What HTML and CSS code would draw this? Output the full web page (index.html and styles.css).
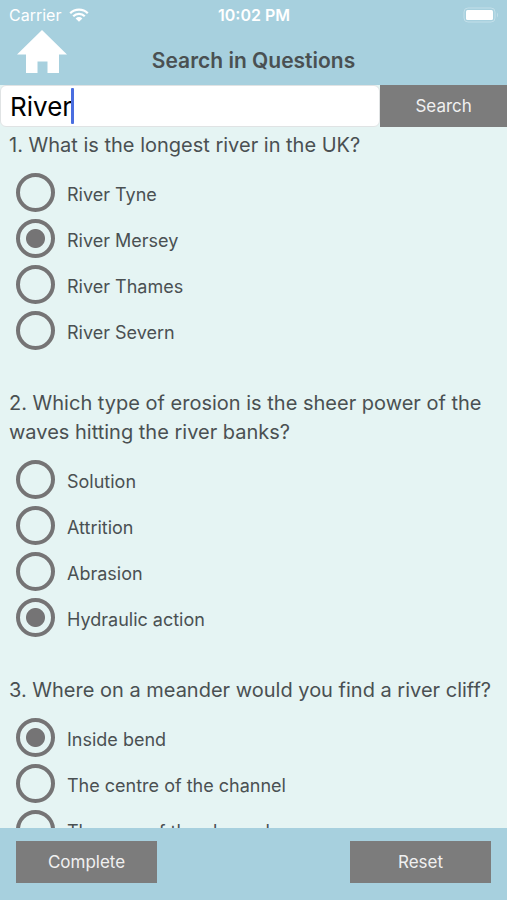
FILE: index.html
```html
<!DOCTYPE html>
<html lang="en">
<head>
<meta charset="utf-8">
<meta name="viewport" content="width=device-width, initial-scale=1">
<title>Search in Questions</title>
<link rel="stylesheet" href="styles.css">
</head>
<body>
<div class="app">
  <header class="header">
    <div class="status">
      <div class="carrier">
        <span>Carrier</span>
        <svg class="wifi" viewBox="0 0 20 14" aria-hidden="true">
          <path d="M1.2 5.2a12.6 12.6 0 0 1 17.6 0M4.2 8.2a8.3 8.3 0 0 1 11.6 0" fill="none" stroke="#fff" stroke-width="2.3"/>
          <path d="M10 13.7 6.6 10.4a4.9 4.9 0 0 1 6.8 0z" fill="#fff"/>
        </svg>
      </div>
      <time class="clock">10:02 PM</time>
      <svg class="battery" viewBox="0 0 36 16" aria-hidden="true">
        <rect x="1" y="1" width="31" height="14" rx="4" fill="none" stroke="#c2dfe9" stroke-width="1"/>
        <rect x="3" y="3" width="27" height="10" rx="1.500" fill="#fff"/>
        <path d="M34 5.5q2 2.5 0 5z" fill="#c2dfe9"/>
      </svg>
    </div>
    <div class="titlebar">
      <a class="home" href="#" aria-label="Home">
        <svg viewBox="0 0 50 44" aria-hidden="true"><path d="M25 0 50 24.500H42V43H30.500V31.500H20.500V43H9V24.500H0z" fill="#fff"/></svg>
      </a>
      <h1 class="title">Search in Questions</h1>
    </div>
  </header>
  <form class="search">
    <div class="field">
      <input class="query" type="text" value="River" aria-label="Search questions">
      <span class="caret"></span>
    </div>
    <button class="button search-button" type="button">Search</button>
  </form>
  <main class="questions">
    <fieldset class="question">
      <legend class="prompt">1. What is the longest river in the UK?</legend>
      <label class="option"><input type="radio" name="q1">River Tyne</label>
      <label class="option"><input type="radio" name="q1" checked>River Mersey</label>
      <label class="option"><input type="radio" name="q1">River Thames</label>
      <label class="option"><input type="radio" name="q1">River Severn</label>
    </fieldset>
    <fieldset class="question">
      <legend class="prompt">2. Which type of erosion is the sheer power of the waves hitting the river banks?</legend>
      <label class="option"><input type="radio" name="q2">Solution</label>
      <label class="option"><input type="radio" name="q2">Attrition</label>
      <label class="option"><input type="radio" name="q2">Abrasion</label>
      <label class="option"><input type="radio" name="q2" checked>Hydraulic action</label>
    </fieldset>
    <fieldset class="question">
      <legend class="prompt">3. Where on a meander would you find a river cliff?</legend>
      <label class="option"><input type="radio" name="q3" checked>Inside bend</label>
      <label class="option"><input type="radio" name="q3">The centre of the channel</label>
      <label class="option"><input type="radio" name="q3">The near of the channel</label>
    </fieldset>
  </main>
  <footer class="actions">
    <button class="button action" type="button">Complete</button>
    <button class="button action" type="button">Reset</button>
  </footer>
</div>
</body>
</html>
```
FILE: styles.css
```css
* {
  box-sizing: border-box;
}

body {
  margin: 0;
  font-family: Inter, Roboto, sans-serif;
  color: #4a5052;
}

.app {
  display: flex;
  flex-direction: column;
  height: 100vh;
  background: #e5f4f3;
}

.header {
  background: #a7d0de;
}

.status {
  display: grid;
  grid-template-columns: 1fr auto 1fr;
  align-items: center;
  height: 30px;
  padding: 0 8px 0 9px;
  font-size: 16px;
  color: #fff;
}

.carrier {
  display: flex;
  align-items: center;
  gap: 8px;
}

.wifi {
  width: 20px;
  height: 14px;
}

.clock {
  font-weight: 600;
}

.battery {
  justify-self: end;
  width: 36px;
  height: 16px;
}

.titlebar {
  display: grid;
  grid-template-columns: 50px 1fr 50px;
  height: 55px;
  padding: 0 17px;
}

.home svg {
  display: block;
  width: 50px;
  height: 44px;
}

.title {
  align-self: center;
  margin: 6px 0 0;
  font-size: 21px;
  font-weight: 600;
  text-align: center;
}

.search {
  display: flex;
  height: 42px;
}

.field {
  position: relative;
  flex: 3;
}

.query {
  display: block;
  width: 100%;
  height: 100%;
  padding: 0 9px;
  border: 1px solid #e0e3e4;
  border-radius: 6px;
  background: #fff;
  font: 26px Inter, Roboto, sans-serif;
  color: #000;
}

.caret {
  position: absolute;
  top: 3px;
  left: 71px;
  width: 3px;
  height: 36px;
  border-radius: 1px;
  background: #4a6ee0;
}

.button {
  padding: 0;
  border: 0;
  background: #7c7c7c;
  font: 17px Inter, Roboto, sans-serif;
  color: #f0f0f0;
}

.search-button {
  flex: 1;
}

.questions {
  flex: 1;
  min-height: 0;
  overflow: hidden;
  padding: 4px 9px 0;
}

.question {
  min-width: 0;
  margin: 0 0 34px;
  padding: 0;
  border: 0;
}

.prompt {
  padding: 0;
  margin-bottom: 11px;
  font-size: 20px;
  line-height: 29px;
}

.option {
  display: flex;
  align-items: center;
  gap: 12px;
  height: 46px;
  padding-left: 7px;
  font-size: 18px;
}

.option input {
  flex: none;
  appearance: none;
  width: 39px;
  height: 39px;
  margin: 0 0 4px;
  border: 4px solid #757475;
  border-radius: 50%;
}

.option input:checked {
  background: radial-gradient(circle, #757475 9px, transparent 10px);
}

.actions {
  display: flex;
  justify-content: space-between;
  padding: 13px 16px 17px;
  background: #a7d0de;
}

.action {
  min-width: 141px;
  height: 42px;
}
```
